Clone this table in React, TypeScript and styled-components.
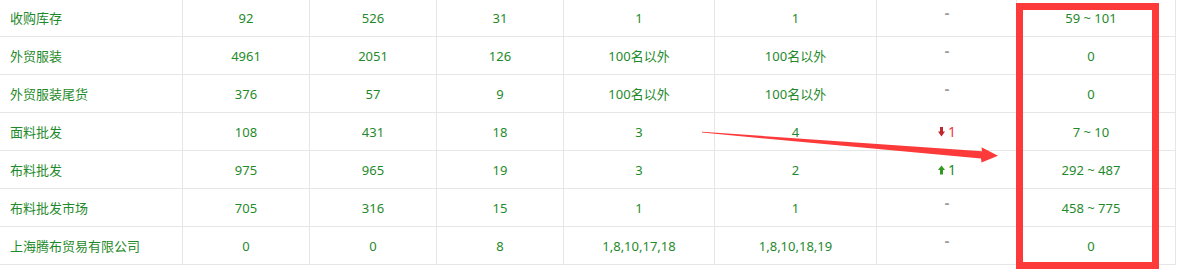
import React from "react";
import styled, { createGlobalStyle } from "styled-components";

const Global = createGlobalStyle`
  html, body { margin: 0; padding: 0; background: #fff; }
  body { font-family: "Noto Sans", "Noto Sans CJK SC", sans-serif; }
`;

const Stage = styled.div`
  position: relative;
  width: 1182px;
  height: 276px;
  overflow: hidden;
`;

const Table = styled.div`
  display: grid;
  grid-template-columns: 183px 127px 127px 127px 151px 162px 140px 159px;
  width: 1176px;
  margin-top: -1px;
`;

const Cell = styled.div<{ $left?: boolean; $padRight?: number }>`
  box-sizing: border-box;
  height: 38px;
  border-right: 1px solid #e6e6e6;
  border-bottom: 1px solid #e6e6e6;
  display: flex;
  align-items: center;
  justify-content: ${(p) => (p.$left ? "flex-start" : "center")};
  padding-left: ${(p) => (p.$left ? "10px" : "0")};
  padding-right: ${(p) => p.$padRight ?? 0}px;
  font-size: 13px;
  color: #1f8a2b;
  white-space: nowrap;
  font-family: "Noto Sans", "Noto Sans CJK SC", sans-serif;
`;

const Dash = styled.span`
  display: inline-block;
  color: #9a9a9a;
  font-size: 14px;
  font-weight: 700;
  line-height: 14px;
  margin-bottom: 9px;
  margin-left: 1px;
`;

const Change = styled.span<{ $up: boolean }>`
  display: inline-flex;
  align-items: center;
  gap: 3px;
  font-size: 14px;
  color: ${(p) => (p.$up ? "#1f8a2b" : "#f2353b")};
  margin-left: 1px;
`;

const RedBox = styled.div`
  position: absolute;
  left: 1016px;
  top: 3px;
  width: 143px;
  height: 266px;
  box-sizing: border-box;
  border: 7px solid #fc3a3a;
  pointer-events: none;
`;

const ArrowSvg = styled.svg`
  position: absolute;
  left: 0;
  top: 0;
  pointer-events: none;
`;

const DownIcon = () => (
  <svg width="7" height="10" viewBox="0 0 7 10">
    <rect x="2" y="0" width="3" height="5" fill="#c0272d" />
    <polygon points="0,4.5 7,4.5 3.5,9.5" fill="#c0272d" />
  </svg>
);

const UpIcon = () => (
  <svg width="7" height="10" viewBox="0 0 7 10">
    <polygon points="3.5,0.5 7,5 0,5" fill="#2f9a1f" />
    <rect x="2" y="4.5" width="3" height="5" fill="#2f9a1f" />
  </svg>
);

type Row = {
  name: string;
  vals: string[];
  change?: { up: boolean; n: number };
  range: string;
};

const rows: Row[] = [
  { name: "收购库存", vals: ["92", "526", "31", "1", "1"], range: "59 ~ 101" },
  { name: "外贸服装", vals: ["4961", "2051", "126", "100名以外", "100名以外"], range: "0" },
  { name: "外贸服装尾货", vals: ["376", "57", "9", "100名以外", "100名以外"], range: "0" },
  { name: "面料批发", vals: ["108", "431", "18", "3", "4"], change: { up: false, n: 1 }, range: "7 ~ 10" },
  { name: "布料批发", vals: ["975", "965", "19", "3", "2"], change: { up: true, n: 1 }, range: "292 ~ 487" },
  { name: "布料批发市场", vals: ["705", "316", "15", "1", "1"], range: "458 ~ 775" },
  { name: "上海腾布贸易有限公司", vals: ["0", "0", "8", "1,8,10,17,18", "1,8,10,18,19"], range: "0" },
];

export default function App() {
  return (
    <>
      <Global />
      <Stage>
        <Table>
          {rows.map((r) => (
            <React.Fragment key={r.name}>
              <Cell $left>{r.name}</Cell>
              {r.vals.map((v, i) => (
                <Cell key={i}>{v}</Cell>
              ))}
              <Cell>
                {r.change ? (
                  <Change $up={r.change.up}>
                    {r.change.up ? <UpIcon /> : <DownIcon />}
                    {r.change.n}
                  </Change>
                ) : (
                  <Dash>-</Dash>
                )}
              </Cell>
              <Cell $padRight={10}>{r.range}</Cell>
            </React.Fragment>
          ))}
        </Table>
        <RedBox />
        <ArrowSvg width="1182" height="276" viewBox="0 0 1182 276">
          <polygon
            points="702,131.8 982,151.2 981.5,147.2 998,155.8 981.5,162.6 981,158.6 702,132.6"
            fill="#fc3a3a"
          />
        </ArrowSvg>
      </Stage>
    </>
  );
}
